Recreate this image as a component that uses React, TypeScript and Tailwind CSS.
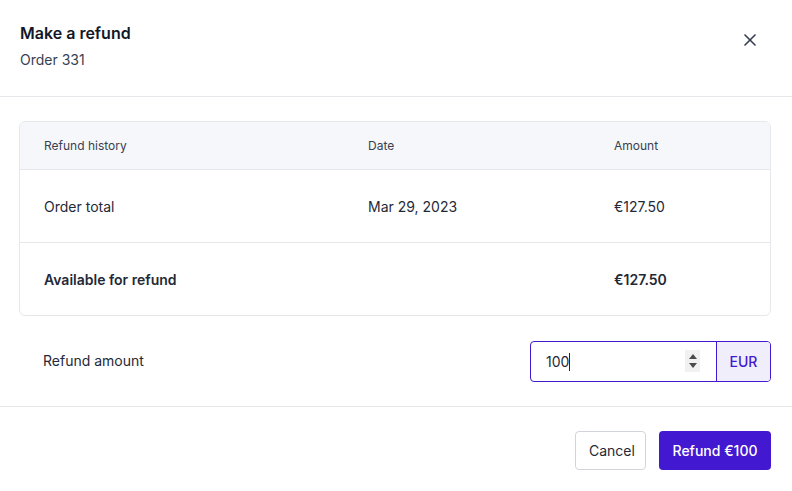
import { X } from "lucide-react";

const font = { fontFamily: "Inter, 'Noto Sans', sans-serif" };

export default function App() {
  return (
    <div className="w-[792px] h-[491px] bg-white text-[#1f2937] overflow-hidden" style={font}>
      {/* Header */}
      <div className="h-[97px] border-b border-[#e5e7eb] flex justify-between px-5 pt-[21px]">
        <div>
          <div className="text-[16px] font-semibold leading-6 text-[#111827]">Make a refund</div>
          <div className="text-[14px] leading-5 mt-[5px] text-[#374151]">Order 331</div>
        </div>
        <button className="w-6 h-6 mt-[7px] mr-[10px] flex items-center justify-center text-[#374151]">
          <X size={20} strokeWidth={2} />
        </button>
      </div>

      {/* Body */}
      <div className="pl-[19px] pr-[21px] pt-6">
        <div className="border border-[#e5e7eb] rounded-md overflow-hidden">
          <div className="grid grid-cols-[324px_246px_1fr] h-[48px] items-center bg-[#f6f7fb] border-b border-[#e5e7eb] text-[12px] text-[#374151] pl-6">
            <div>Refund history</div>
            <div>Date</div>
            <div>Amount</div>
          </div>
          <div className="grid grid-cols-[324px_246px_1fr] h-[73px] items-center border-b border-[#e5e7eb] text-[14px] text-[#1f2937] pl-6">
            <div>Order total</div>
            <div>Mar 29, 2023</div>
            <div>€127.50</div>
          </div>
          <div className="grid grid-cols-[324px_246px_1fr] h-[72px] items-center text-[14px] font-semibold text-[#1f2937] pl-6">
            <div>Available for refund</div>
            <div></div>
            <div>€127.50</div>
          </div>
        </div>

        <div className="flex items-center justify-between h-[90px] pl-6">
          <div className="text-[14px] text-[#1f2937] -mt-[2px]">Refund amount</div>
          <div className="flex w-[241px] h-[41px] border border-[#4318d1] rounded-[4px] overflow-hidden">
            <div className="flex-1 flex items-center justify-between pl-[15px] pr-[16px]">
              <span className="text-[14px] text-[#1f2937]">
                100<span className="inline-block w-px h-[18px] bg-[#1f2937] align-middle -mt-[2px]" />
              </span>
              <div className="w-[15px] h-[22px] bg-[#f1f1f1] flex flex-col items-center justify-center gap-[4px]">
                <div className="w-0 h-0 border-l-[4px] border-r-[4px] border-b-[5px] border-l-transparent border-r-transparent border-b-[#4b4b4b]" />
                <div className="w-0 h-0 border-l-[4px] border-r-[4px] border-t-[5px] border-l-transparent border-r-transparent border-t-[#4b4b4b]" />
              </div>
            </div>
            <div className="w-[54px] border-l border-[#4318d1] bg-[#f0eefb] text-[#4318d1] text-[14px] font-medium flex items-center justify-center">
              EUR
            </div>
          </div>
        </div>
      </div>

      {/* Footer */}
      <div className="border-t border-[#e5e7eb] flex justify-end gap-[13px] px-[21px] pt-6">
        <button className="h-[39px] px-[13px] w-[71px] border border-[#d1d5db] rounded-[4px] text-[14px] text-[#1f2937] bg-white">
          Cancel
        </button>
        <button className="h-[39px] w-[112px] rounded-[4px] text-[14px] font-medium text-white bg-[#4318d1]">
          Refund €100
        </button>
      </div>
    </div>
  );
}
